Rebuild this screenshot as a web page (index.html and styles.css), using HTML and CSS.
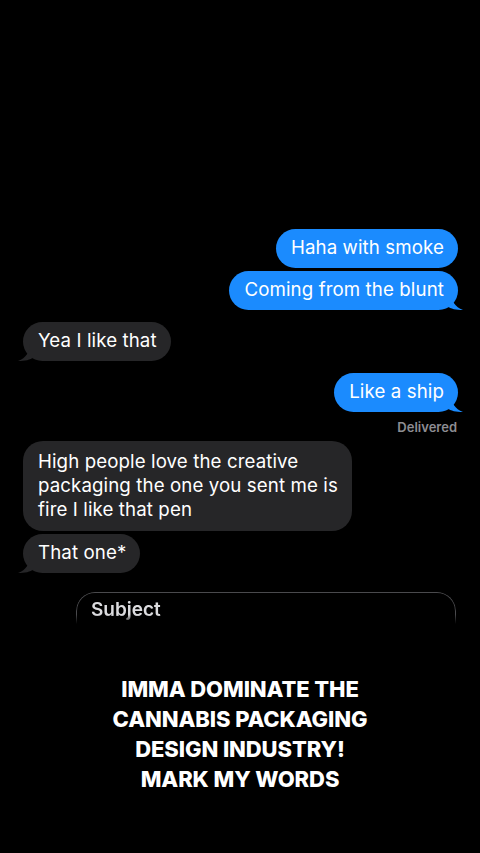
FILE: index.html
```html
<!DOCTYPE html>
<html>
<head>
<meta charset="utf-8">
<link rel="stylesheet" href="styles.css">
</head>
<body>
<div class="screen">
  <div class="thread">
    <div class="msg out"><span class="bubble">Haha with smoke</span></div>
    <div class="msg out tight"><span class="bubble tail">Coming from the blunt</span></div>
    <div class="msg in group"><span class="bubble tail">Yea I like that</span></div>
    <div class="msg out group"><span class="bubble tail">Like a ship</span></div>
    <div class="status">Delivered</div>
    <div class="msg in"><span class="bubble wide">High people love the creative packaging the one you sent me is fire I like that pen</span></div>
    <div class="msg in tight"><span class="bubble tail">That one*</span></div>
  </div>
  <div class="compose">
    <div class="subject">Subject</div>
  </div>
  <div class="caption">IMMA DOMINATE THE<br>CANNABIS PACKAGING<br>DESIGN INDUSTRY!<br>MARK MY WORDS</div>
</div>
</body>
</html>
```
FILE: styles.css
```css
html, body {
  margin: 0;
  padding: 0;
  background: #000;
}
.screen {
  width: 480px;
  height: 853px;
  overflow: hidden;
  background: #000;
  font-family: "Inter", "Roboto", sans-serif;
  display: flex;
  flex-direction: column;
}
.thread {
  display: flex;
  flex-direction: column;
  padding: 229px 22px 0 23px;
}
.msg {
  display: flex;
}
.msg.out {
  justify-content: flex-end;
}
.msg.in {
  justify-content: flex-start;
}
.msg.tight {
  margin-top: 3px;
}
.msg.group {
  margin-top: 12px;
}
.bubble {
  position: relative;
  display: inline-block;
  padding: 7px 14px 8px 15px;
  border-radius: 20px;
  font-size: 18.7px;
  line-height: 24px;
  letter-spacing: 0.1px;
}
.out .bubble {
  background: #1b8bfe;
  color: #fff;
}
.in .bubble {
  background: #262628;
  color: #fff;
}
.bubble.wide {
  max-width: 300px;
  padding: 9px 14px 9px 15px;
}
.bubble.tail::after {
  content: "";
  position: absolute;
  bottom: 0;
  width: 16px;
  height: 18px;
  background: inherit;
}
.out .bubble.tail::after {
  right: -5px;
  clip-path: path("M0 0 L4 0 C4 9 8 15 16 18 C9 18 4 17 0 14 Z");
}
.in .bubble.tail::after {
  left: -5px;
  clip-path: path("M16 0 L12 0 C12 9 8 15 0 18 C7 18 12 17 16 14 Z");
}
.status {
  align-self: flex-end;
  margin: 7px 1px 6px 0;
  font-size: 13px;
  font-weight: 600;
  color: #8d8d92;
  line-height: 16px;
}
.compose {
  margin: 19px 24px 0 76px;
  height: 32px;
  border: 1.5px solid #4a4a4d;
  border-bottom: none;
  border-radius: 19px 19px 0 0;
  box-sizing: border-box;
  padding: 6px 0 0 14px;
  -webkit-mask-image: linear-gradient(#000 70%, transparent);
}
.subject {
  color: #dcdcdf;
  font-size: 19px;
  font-weight: 600;
  line-height: 22px;
}
.caption {
  margin-top: 50px;
  text-align: center;
  color: #fff;
  font-weight: 800;
  font-size: 22px;
  line-height: 30px;
  letter-spacing: -0.1px;
}
```
